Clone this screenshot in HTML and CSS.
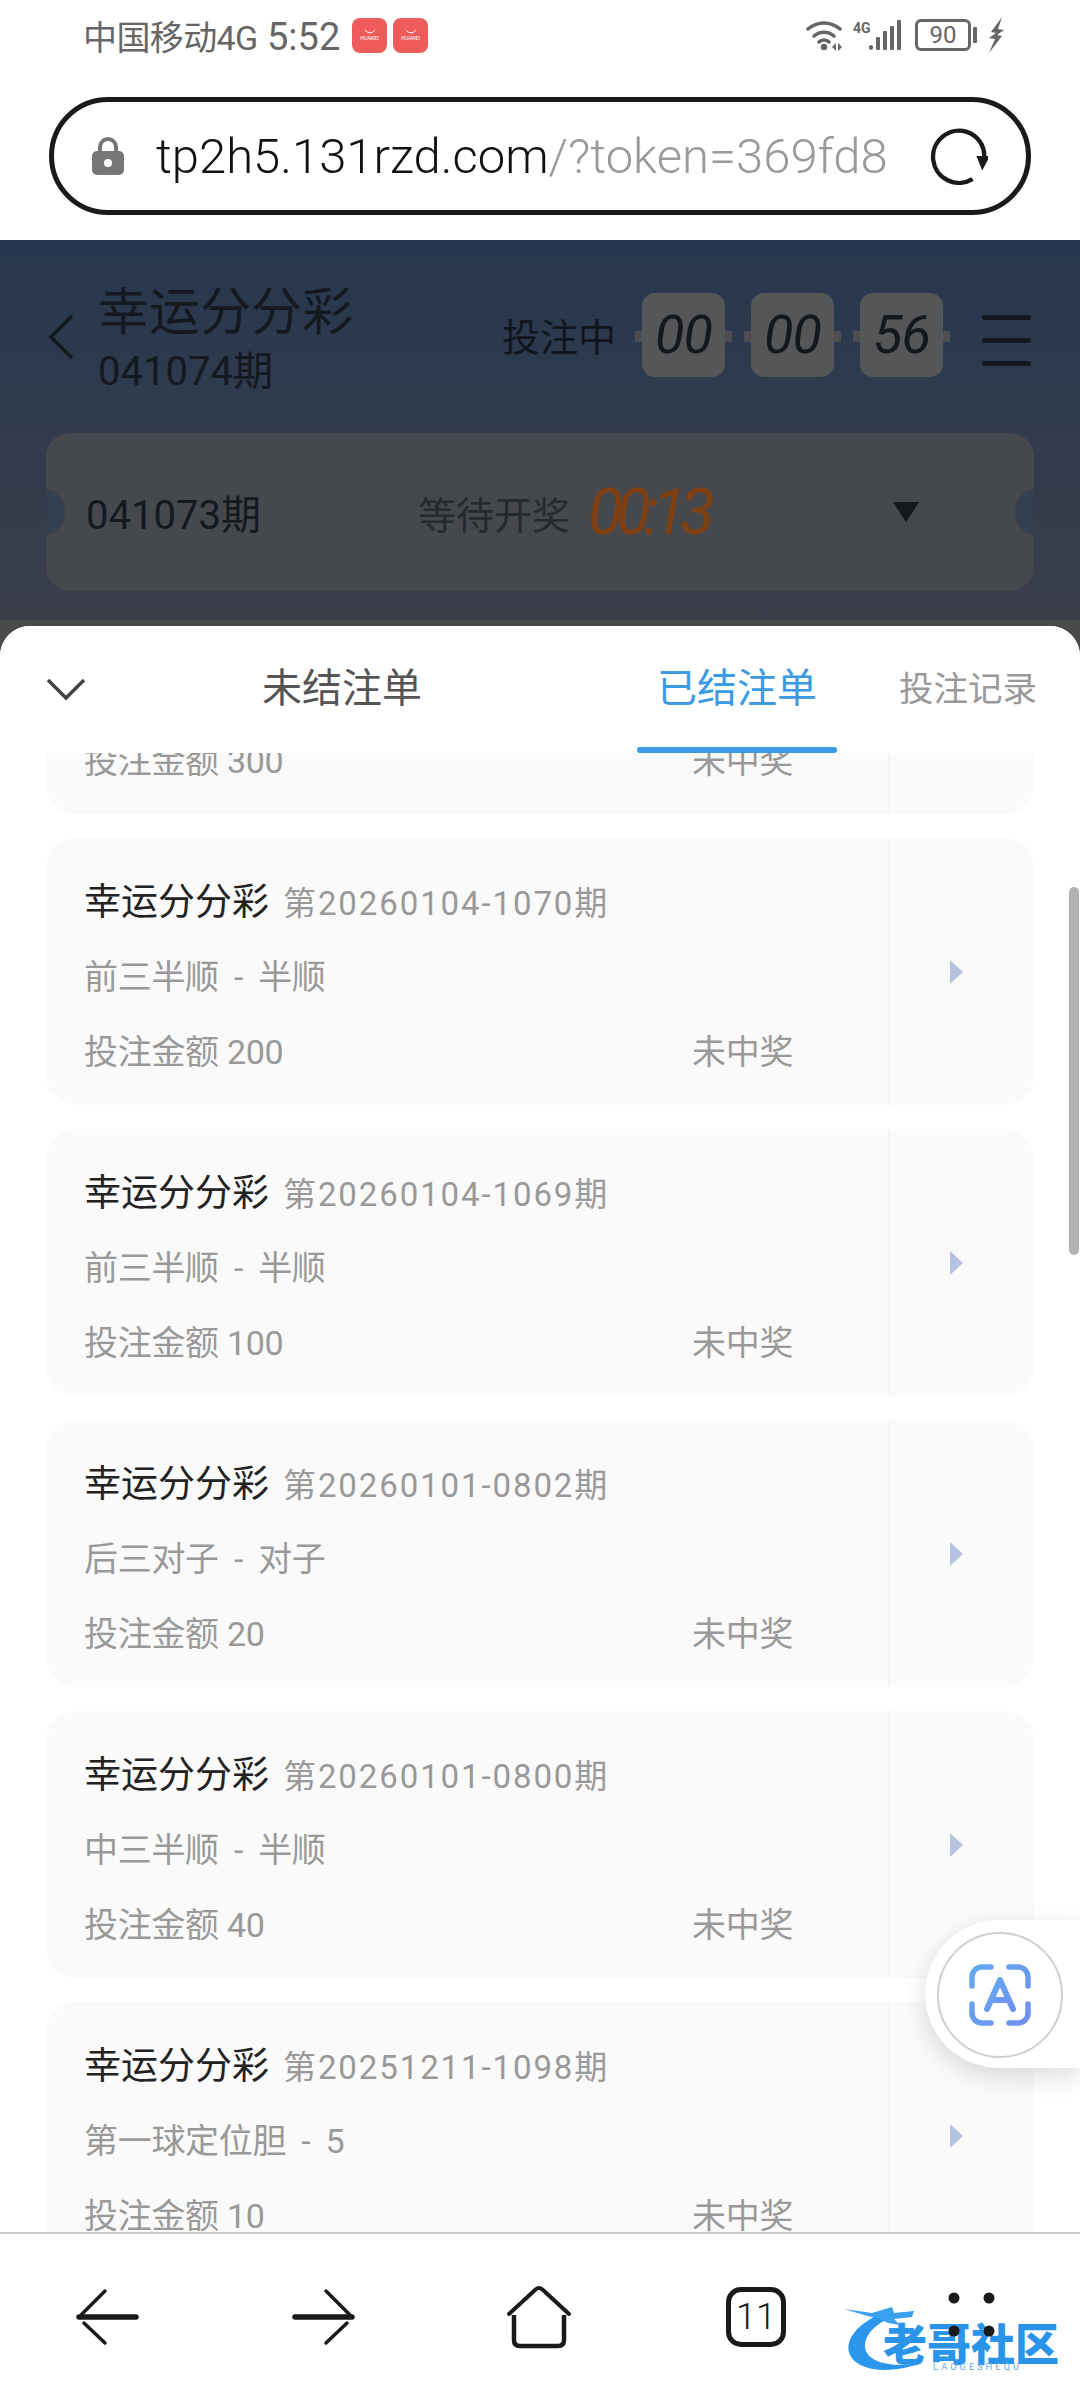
FILE: index.html
```html
<!DOCTYPE html>
<html lang="zh-CN">
<head>
  <meta charset="UTF-8">
  <title>幸运分分彩</title>
  <link rel="stylesheet" href="styles.css">
</head>
<body>
  <div class="status-bar">
    <span class="carrier">中国移动4G</span>
    <span class="clock">5:52</span>
    <span class="app-badge"><svg width="14" height="6" viewBox="0 0 14 6"><path d="M2 1q5 6 10 0" fill="none" stroke="#fff" stroke-width="1"/></svg><b>HUAWEI</b></span>
    <span class="app-badge"><svg width="14" height="6" viewBox="0 0 14 6"><path d="M2 1q5 6 10 0" fill="none" stroke="#fff" stroke-width="1"/></svg><b>HUAWEI</b></span>
    <div class="status-right">
      <svg class="wifi" width="38" height="34" viewBox="0 0 38 34">
        <path d="M2 11a24 24 0 0 1 32 0M8 18a15 15 0 0 1 20 0M13 24a7 7 0 0 1 10 0" fill="none" stroke="#666" stroke-width="3.5" stroke-linecap="round"/>
        <circle cx="18" cy="29" r="3.2" fill="#666"/>
        <path d="M30 25v8l-4-4zM32 25v8l4-4z" fill="#666"/>
      </svg>
      <span class="net">4G</span>
      <svg class="signal" width="32" height="32" viewBox="0 0 32 32">
        <g fill="#666"><rect x="0" y="26" width="4" height="5" rx="2"/><rect x="7" y="18" width="4" height="13" rx="1"/><rect x="14" y="12" width="4" height="19" rx="1"/><rect x="21" y="7" width="4" height="24" rx="1"/><rect x="28" y="1" width="4" height="30" rx="1"/></g>
      </svg>
      <span class="battery">90</span>
      <span class="battery-tip"></span>
      <svg class="bolt" width="16" height="36" viewBox="0 0 16 36"><path d="M14 0L3 15l5 1-7 5 6 1-6 14 13-17-5-1 7-5-6-1z" fill="#666"/></svg>
    </div>
  </div>

  <div class="url-wrap">
    <div class="url-bar">
      <svg class="lock" width="32" height="38" viewBox="0 0 32 38">
        <path d="M8 16v-6a8 8 0 0 1 16 0v6" fill="none" stroke="#777" stroke-width="4"/>
        <rect x="0" y="14" width="32" height="24" rx="5" fill="#777"/>
        <circle cx="16" cy="26" r="4" fill="#fff"/>
      </svg>
      <div class="url-text">tp2h5.131rzd.com<span class="url-query">/?token=369fd8</span></div>
      <svg class="reload" width="58" height="58" viewBox="0 0 60 60">
        <path d="M44 54A27 27 0 1 1 38 5C50 9 57 20 56 32" fill="none" stroke="#1a1a1a" stroke-width="4.5"/>
        <path d="M48 30h14l-8 15z" fill="#1a1a1a"/>
      </svg>
    </div>
  </div>

  <div class="game-head">
    <div class="head-row">
      <svg class="back" width="26" height="46" viewBox="0 0 26 46"><path d="M24 2L3 23l21 21" fill="none" stroke="#14181f" stroke-width="3.5"/></svg>
      <div class="title-block">
        <div class="game-name">幸运分分彩</div>
        <div class="game-issue">041074期</div>
      </div>
      <div class="bet-state">投注中</div>
      <div class="flip-timer">
        <span class="flip">00</span>
        <span class="flip">00</span>
        <span class="flip">56</span>
      </div>
      <div class="menu"><i></i><i></i><i></i></div>
    </div>
    <div class="ticket">
      <span class="ticket-issue">041073期</span>
      <span class="ticket-wait">等待开奖</span>
      <span class="ticket-time">00:13</span>
      <span class="ticket-caret"></span>
    </div>
  </div>

  <div class="sheet-wrap">
    <div class="sheet">
      <div class="tabs">
        <svg class="tabs-close" width="40" height="24" viewBox="0 0 40 24"><path d="M2 3l18 18L38 3" fill="none" stroke="#444" stroke-width="3.5"/></svg>
        <span class="tab tab-open">未结注单</span>
        <span class="tab tab-active">已结注单</span>
        <span class="tab tab-log">投注记录</span>
      </div>
      <div class="list">
        <div class="list-inner">
          <!-- scrolled: only the last row of this card still shows -->
          <div class="card">
            <div class="card-main">
              <div class="card-row"></div>
              <div class="card-row"></div>
              <div class="card-row card-money"><span>投注金额 300</span><span>未中奖</span></div>
            </div>
            <div class="card-side"></div>
          </div>
          <div class="card">
            <div class="card-main">
              <div class="card-row"><span class="card-name">幸运分分彩</span><span class="card-period">第20260104-1070期</span></div>
              <div class="card-row">前三半顺 - 半顺</div>
              <div class="card-row card-money"><span>投注金额 200</span><span>未中奖</span></div>
            </div>
            <div class="card-side"><span class="card-arrow"></span></div>
          </div>
          <div class="card">
            <div class="card-main">
              <div class="card-row"><span class="card-name">幸运分分彩</span><span class="card-period">第20260104-1069期</span></div>
              <div class="card-row">前三半顺 - 半顺</div>
              <div class="card-row card-money"><span>投注金额 100</span><span>未中奖</span></div>
            </div>
            <div class="card-side"><span class="card-arrow"></span></div>
          </div>
          <div class="card">
            <div class="card-main">
              <div class="card-row"><span class="card-name">幸运分分彩</span><span class="card-period">第20260101-0802期</span></div>
              <div class="card-row">后三对子 - 对子</div>
              <div class="card-row card-money"><span>投注金额 20</span><span>未中奖</span></div>
            </div>
            <div class="card-side"><span class="card-arrow"></span></div>
          </div>
          <div class="card">
            <div class="card-main">
              <div class="card-row"><span class="card-name">幸运分分彩</span><span class="card-period">第20260101-0800期</span></div>
              <div class="card-row">中三半顺 - 半顺</div>
              <div class="card-row card-money"><span>投注金额 40</span><span>未中奖</span></div>
            </div>
            <div class="card-side"><span class="card-arrow"></span></div>
          </div>
          <div class="card">
            <div class="card-main">
              <div class="card-row"><span class="card-name">幸运分分彩</span><span class="card-period">第20251211-1098期</span></div>
              <div class="card-row">第一球定位胆 - 5</div>
              <div class="card-row card-money"><span>投注金额 10</span><span>未中奖</span></div>
            </div>
            <div class="card-side"><span class="card-arrow"></span></div>
          </div>
        </div>
        <div class="scrollbar"></div>
      </div>
      <div class="float-btn">
        <div class="float-circle">
          <svg width="62" height="62" viewBox="0 0 62 62">
            <defs><linearGradient id="scanGrad" x1="0" y1="0" x2="1" y2="1"><stop offset="0" stop-color="#62aaf2"/><stop offset="1" stop-color="#7090ee"/></linearGradient></defs>
            <path d="M3 22V13A10 10 0 0 1 13 3H22M40 3H49A10 10 0 0 1 59 13V22M59 40V49A10 10 0 0 1 49 59H40M22 59H13A10 10 0 0 1 3 49V40" fill="none" stroke="url(#scanGrad)" stroke-width="5.5" stroke-linecap="round"/>
            <path d="M18 45L31 16L44 45M23 36H39" fill="none" stroke="url(#scanGrad)" stroke-width="6" stroke-linecap="round" stroke-linejoin="round"/>
          </svg>
        </div>
      </div>
    </div>
  </div>

  <div class="bottom-nav">
    <svg class="nav-back" width="64" height="64" viewBox="0 0 64 64">
      <path d="M3 32H60" stroke="#1a1a1a" stroke-width="5.5" stroke-linecap="round"/>
      <path d="M29 6L5 30M8 38L29 58" fill="none" stroke="#1a1a1a" stroke-width="3.5" stroke-linecap="round"/>
    </svg>
    <svg class="nav-forward" width="64" height="64" viewBox="0 0 64 64">
      <path d="M61 32H4" stroke="#1a1a1a" stroke-width="5.5" stroke-linecap="round"/>
      <path d="M35 6L59 30M56 38L35 58" fill="none" stroke="#1a1a1a" stroke-width="3.5" stroke-linecap="round"/>
    </svg>
    <svg class="nav-home" width="64" height="64" viewBox="0 0 64 64">
      <path d="M2 29L28 5Q32 1 36 5L62 29" fill="none" stroke="#1a1a1a" stroke-width="4" stroke-linecap="round"/>
      <path d="M7 30V55Q7 61 13 61H51Q57 61 57 55V30" fill="none" stroke="#1a1a1a" stroke-width="4.5"/>
    </svg>
    <div class="tab-count">11</div>
    <svg class="nav-more" width="60" height="64" viewBox="0 0 60 64">
      <g fill="#1a1a1a"><circle cx="13" cy="13" r="5.5"/><circle cx="48" cy="13" r="5.5"/><circle cx="13" cy="46" r="5.5"/><circle cx="48" cy="46" r="5.5"/></g>
    </svg>
    <div class="watermark">
      <svg class="wm-dragon" width="120" height="72" viewBox="0 0 120 72">
        <path d="M38 9C14 20 2 36 8 50C16 66 46 70 80 58C56 62 30 60 24 46C20 36 28 22 46 14Z" fill="#2a96ec"/>
        <path d="M2 4L30 8L50 2L52 8L72 6L70 12L52 14L58 20L46 18L38 14L22 10Z" fill="#3aa0f0"/>
      </svg>
      <div class="wm-name">老哥社区</div>
      <div class="wm-pinyin">LAOGESHEQU</div>
    </div>
  </div>
</body>
</html>
```

FILE: styles.css
```css
* {
  box-sizing: border-box;
}
html, body {
  margin: 0;
  padding: 0;
}
body {
  width: 1080px;
  height: 2400px;
  display: flex;
  flex-direction: column;
  overflow: hidden;
  background-color: #fff;
  font-family: Roboto, "Noto Sans CJK SC", sans-serif;
}

/* status bar */
.status-bar {
  height: 70px;
  padding-left: 83px;
  display: flex;
  align-items: center;
  color: #666;
}
.carrier {
  font-size: 34px;
  letter-spacing: -0.6px;
  width: 184px;
  white-space: nowrap;
}
.clock {
  font-size: 38px;
  width: 85px;
  margin-top: 3px;
  white-space: nowrap;
}
.app-badge {
  width: 35px;
  height: 35px;
  margin-right: 6px;
  border-radius: 8px;
  background-color: #ee5b5b;
  display: flex;
  flex-direction: column;
  align-items: center;
  justify-content: center;
  color: #fff;
}
.app-badge b {
  font-size: 5px;
  line-height: 7px;
  font-weight: 400;
}
.status-right {
  margin-left: auto;
  margin-right: 76px;
  display: flex;
  align-items: center;
}
.net {
  font-size: 14px;
  font-weight: 700;
  width: 18px;
  margin: 0 0 14px 9px;
}
.signal {
  margin-left: -2px;
}
.battery {
  width: 56px;
  height: 32px;
  margin-left: 14px;
  border: 3px solid #666;
  border-radius: 6px;
  font-size: 24px;
  line-height: 26px;
  text-align: center;
}
.battery-tip {
  width: 4px;
  height: 16px;
  margin-left: 2px;
  border-radius: 1px;
  background-color: #666;
}
.bolt {
  margin-left: 11px;
}

/* address bar */
.url-wrap {
  height: 170px;
  padding: 27px 49px 0;
}
.url-bar {
  height: 118px;
  border: 5px solid #1a1a1a;
  border-radius: 59px;
  display: flex;
  align-items: center;
  padding-left: 38px;
}
.url-text {
  width: 732px;
  margin-left: 32px;
  overflow: hidden;
  white-space: nowrap;
  font-size: 49px;
  font-weight: 300;
  color: #111;
}
.url-query {
  color: #9a9a9a;
}
.reload {
  margin-left: 42px;
}

/* dimmed game header */
.game-head {
  height: 380px;
  padding: 48px 46px 0;
  background: linear-gradient(#27374f, #3a3f4a);
}
.head-row {
  display: flex;
  height: 102px;
}
.back {
  margin: 26px 0 0 2px;
}
.title-block {
  margin-left: 24px;
  color: #14181f;
}
.game-name {
  font-size: 51px;
  line-height: 50px;
}
.game-issue {
  margin-top: 16px;
  font-size: 40px;
  line-height: 36px;
}
.bet-state {
  margin-left: auto;
  margin-top: 27px;
  font-size: 38px;
  line-height: 46px;
  color: #10151d;
}
.flip-timer {
  position: relative;
  z-index: 0;
  display: flex;
  gap: 26px;
  margin-left: 26px;
  margin-top: 5px;
}
.flip {
  position: relative;
  width: 83px;
  height: 84px;
  border-radius: 13px;
  background-color: #555658;
  text-align: center;
  font-size: 54px;
  font-style: italic;
  line-height: 84px;
  letter-spacing: -1px;
  color: #14171c;
}
.flip::before {
  content: "";
  position: absolute;
  left: -7px;
  right: -7px;
  top: 38px;
  height: 11px;
  background-color: #4c4e52;
  z-index: -1;
}
.menu {
  width: 49px;
  margin: 27px 3px 0 39px;
  display: flex;
  flex-direction: column;
  gap: 18px;
}
.menu i {
  height: 5px;
  border-radius: 2px;
  background-color: #14181f;
}
.ticket {
  position: relative;
  height: 158px;
  margin-top: 43px;
  padding-left: 40px;
  display: flex;
  align-items: center;
  border-radius: 24px;
  background-color: #45484d;
  overflow: hidden;
}
.ticket::before,
.ticket::after {
  content: "";
  position: absolute;
  top: 55px;
  width: 48px;
  height: 48px;
  border-radius: 50%;
  background-color: #33404f;
}
.ticket::before {
  left: -29px;
}
.ticket::after {
  right: -29px;
}
.ticket-issue {
  width: 332px;
  font-size: 40px;
  color: #14181f;
}
.ticket-wait {
  width: 170px;
  font-size: 38px;
  color: #26292e;
}
.ticket-time {
  width: 305px;
  font-size: 64px;
  font-style: italic;
  letter-spacing: -7px;
  color: #7f3f10;
}
.ticket-caret {
  width: 0;
  height: 0;
  border-left: 13px solid transparent;
  border-right: 13px solid transparent;
  border-top: 20px solid #14171c;
}

/* result sheet */
.sheet-wrap {
  flex: 1;
  min-height: 0;
  padding-top: 6px;
  background-color: #4a4a4c;
}
.sheet {
  position: relative;
  height: 100%;
  display: flex;
  flex-direction: column;
  border-radius: 30px 30px 0 0;
  background-color: #fff;
  overflow: hidden;
}
.tabs {
  position: relative;
  z-index: 2;
  height: 127px;
  flex-shrink: 0;
  display: flex;
  align-items: center;
  padding: 0 0 2px 46px;
  background-color: #fff;
  white-space: nowrap;
}
.tab {
  position: relative;
  font-size: 40px;
  line-height: 50px;
  color: #555;
}
.tab-open {
  margin-left: 176px;
}
.tab-active {
  margin-left: 235px;
  color: #3b9ae1;
}
.tab-active::after {
  content: "";
  position: absolute;
  left: -20px;
  right: -20px;
  top: 83px;
  height: 6px;
  border-radius: 3px;
  background-color: #3a9ae8;
}
.tab-log {
  margin-left: 82px;
  font-size: 34.5px;
  color: #999;
}
.list {
  position: relative;
  flex: 1;
  min-height: 0;
  overflow: hidden;
}
.list-inner {
  margin-top: -206px;
  padding: 0 46px;
  display: flex;
  flex-direction: column;
  gap: 24px;
}
.card {
  height: 267px;
  flex-shrink: 0;
  display: flex;
  border-radius: 30px;
  background-color: #fafafa;
}
.card-main {
  width: 844px;
  padding: 27px 0 0 38px;
  border-right: 2px solid #f5f5f5;
}
.card-row {
  height: 75px;
  line-height: 75px;
  font-size: 34px;
  letter-spacing: -0.3px;
  word-spacing: 7px;
  color: #999;
  white-space: nowrap;
}
.card-name {
  font-size: 37px;
  letter-spacing: 0;
  color: #222;
  margin-right: 14px;
}
.card-period {
  font-size: 33px;
  letter-spacing: 1.9px;
}
.card-money {
  display: grid;
  grid-template-columns: 608px auto;
  word-spacing: 0;
}
.card-side {
  flex: 1;
  display: flex;
  align-items: center;
  padding-left: 60px;
}
.card-arrow {
  width: 0;
  height: 0;
  border-top: 12px solid transparent;
  border-bottom: 12px solid transparent;
  border-left: 13px solid #b5c2e0;
}
.scrollbar {
  position: absolute;
  top: 134px;
  right: 1px;
  width: 10px;
  height: 368px;
  border-radius: 5px;
  background-color: #b2b2b2;
}
.float-btn {
  position: absolute;
  left: 925px;
  top: 1294px;
  width: 155px;
  height: 148px;
  padding: 12px 0 0 12px;
  border-radius: 74px 0 0 74px;
  background-color: #fff;
  box-shadow: 0 8px 26px rgba(0, 0, 0, 0.14);
  z-index: 3;
}
.float-circle {
  width: 126px;
  height: 126px;
  border: 2px solid #cfcfcf;
  border-radius: 50%;
  display: flex;
  align-items: center;
  justify-content: center;
}

/* browser bottom bar */
.bottom-nav {
  position: relative;
  height: 168px;
  flex-shrink: 0;
  padding: 51px 0 0 76px;
  display: flex;
  align-items: flex-start;
  border-top: 2px solid #ccc;
  background-color: #fff;
}
.nav-forward {
  margin-left: 151px;
}
.nav-home {
  margin-left: 152px;
}
.tab-count {
  width: 60px;
  height: 60px;
  margin: 2px 0 0 155px;
  border: 5px solid #1a1a1a;
  border-radius: 15px;
  text-align: center;
  font-size: 36px;
  font-weight: 300;
  line-height: 50px;
  color: #1a1a1a;
}
.nav-more {
  position: relative;
  z-index: 1;
  margin-left: 155px;
}
.watermark {
  position: absolute;
  left: 842px;
  top: 71px;
  width: 225px;
  height: 70px;
  padding: 17px 0 0 41px;
}
.wm-dragon {
  position: absolute;
  left: 0;
  top: 0;
}
.wm-name {
  position: relative;
  font-size: 44px;
  line-height: 40px;
  font-weight: 900;
  font-family: "Noto Sans CJK SC", sans-serif;
  color: #2a93ea;
  white-space: nowrap;
}
.wm-pinyin {
  position: relative;
  margin-left: 50px;
  font-size: 9px;
  line-height: 10px;
  letter-spacing: 3.2px;
  color: #5ea8e8;
}
```
